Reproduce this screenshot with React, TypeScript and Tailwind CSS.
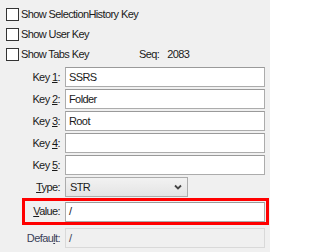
import { ReactNode } from "react";

function Check({ label }: { label: string }) {
  return (
    <div className="flex items-center h-[20px]">
      <span className="ml-[6px] w-[13px] h-[13px] border border-[#333333] bg-white" />
      <span className="ml-[2px]">{label}</span>
    </div>
  );
}

function Field({ label, value }: { label: ReactNode; value: string }) {
  return (
    <div className="flex items-center h-[20px] mt-[2px]">
      <span className="w-[61px] text-right pr-[1px]">{label}</span>
      <div className="ml-[4px] mr-[5px] flex-1 h-[20px] bg-white border border-[#acacac] border-t-[#9a9a9a] flex items-center px-[3px]">
        {value}
      </div>
    </div>
  );
}

export default function App() {
  return (
    <div
      className="w-[270px] h-[252px] overflow-hidden bg-[#f0f0f0] text-[11px] tracking-[-0.6px] text-[#1a1a1a] pt-[4px]"
      style={{ fontFamily: '"Liberation Sans", Arial, sans-serif' }}
    >
      <Check label="Show SelectionHistory Key" />
      <Check label="Show User Key" />
      <div className="flex items-center h-[20px]">
        <span className="ml-[6px] w-[13px] h-[13px] border border-[#333333] bg-white" />
        <span className="ml-[2px] w-[118px]">Show Tabs Key</span>
        <span>Seq:</span>
        <span className="ml-[8px]">2083</span>
      </div>

      <div className="mt-[3px]">
        <Field label={<>Key <u>1</u>:</>} value="SSRS" />
        <Field label={<>Key <u>2</u>:</>} value="Folder" />
        <Field label={<>Key <u>3</u>:</>} value="Root" />
        <Field label={<>Key <u>4</u>:</>} value="" />
        <Field label={<>Key <u>5</u>:</>} value="" />

        <div className="flex items-center h-[20px] mt-[2px]">
          <span className="w-[61px] text-right pr-[1px]">
            <u>T</u>ype:
          </span>
          <div className="ml-[4px] w-[123px] h-[20px] border border-[#acacac] bg-gradient-to-b from-[#f2f2f2] to-[#e4e4e4] flex items-center justify-between pl-[4px] pr-[5px]">
            <span>STR</span>
            <svg width="8" height="6" viewBox="0 0 8 6">
              <path d="M1 1.5 L4 4.5 L7 1.5" stroke="#444" strokeWidth="1.8" fill="none" />
            </svg>
          </div>
        </div>
      </div>

      <div className="mt-[1px] ml-[22px] mr-[1px] border-[3px] border-[#ff0000] flex items-center h-[27px]">
        <span className="w-[36px] text-right pr-[1px]">
          <u>V</u>alue:
        </span>
        <div className="ml-[4px] mr-[1px] flex-1 h-[20px] bg-white border border-[#acacac] border-t-[#9a9a9a] flex items-center px-[3px]">
          /
        </div>
      </div>

      <div className="flex items-center h-[20px] mt-[3px] text-[#3a3f58]">
        <span className="w-[61px] text-right pr-[1px]">
          Defau<u>l</u>t:
        </span>
        <div className="ml-[4px] mr-[5px] flex-1 h-[20px] bg-[#f0f0f0] border border-[#d9d9d9] flex items-center px-[3px]">
          /
        </div>
      </div>
    </div>
  );
}
